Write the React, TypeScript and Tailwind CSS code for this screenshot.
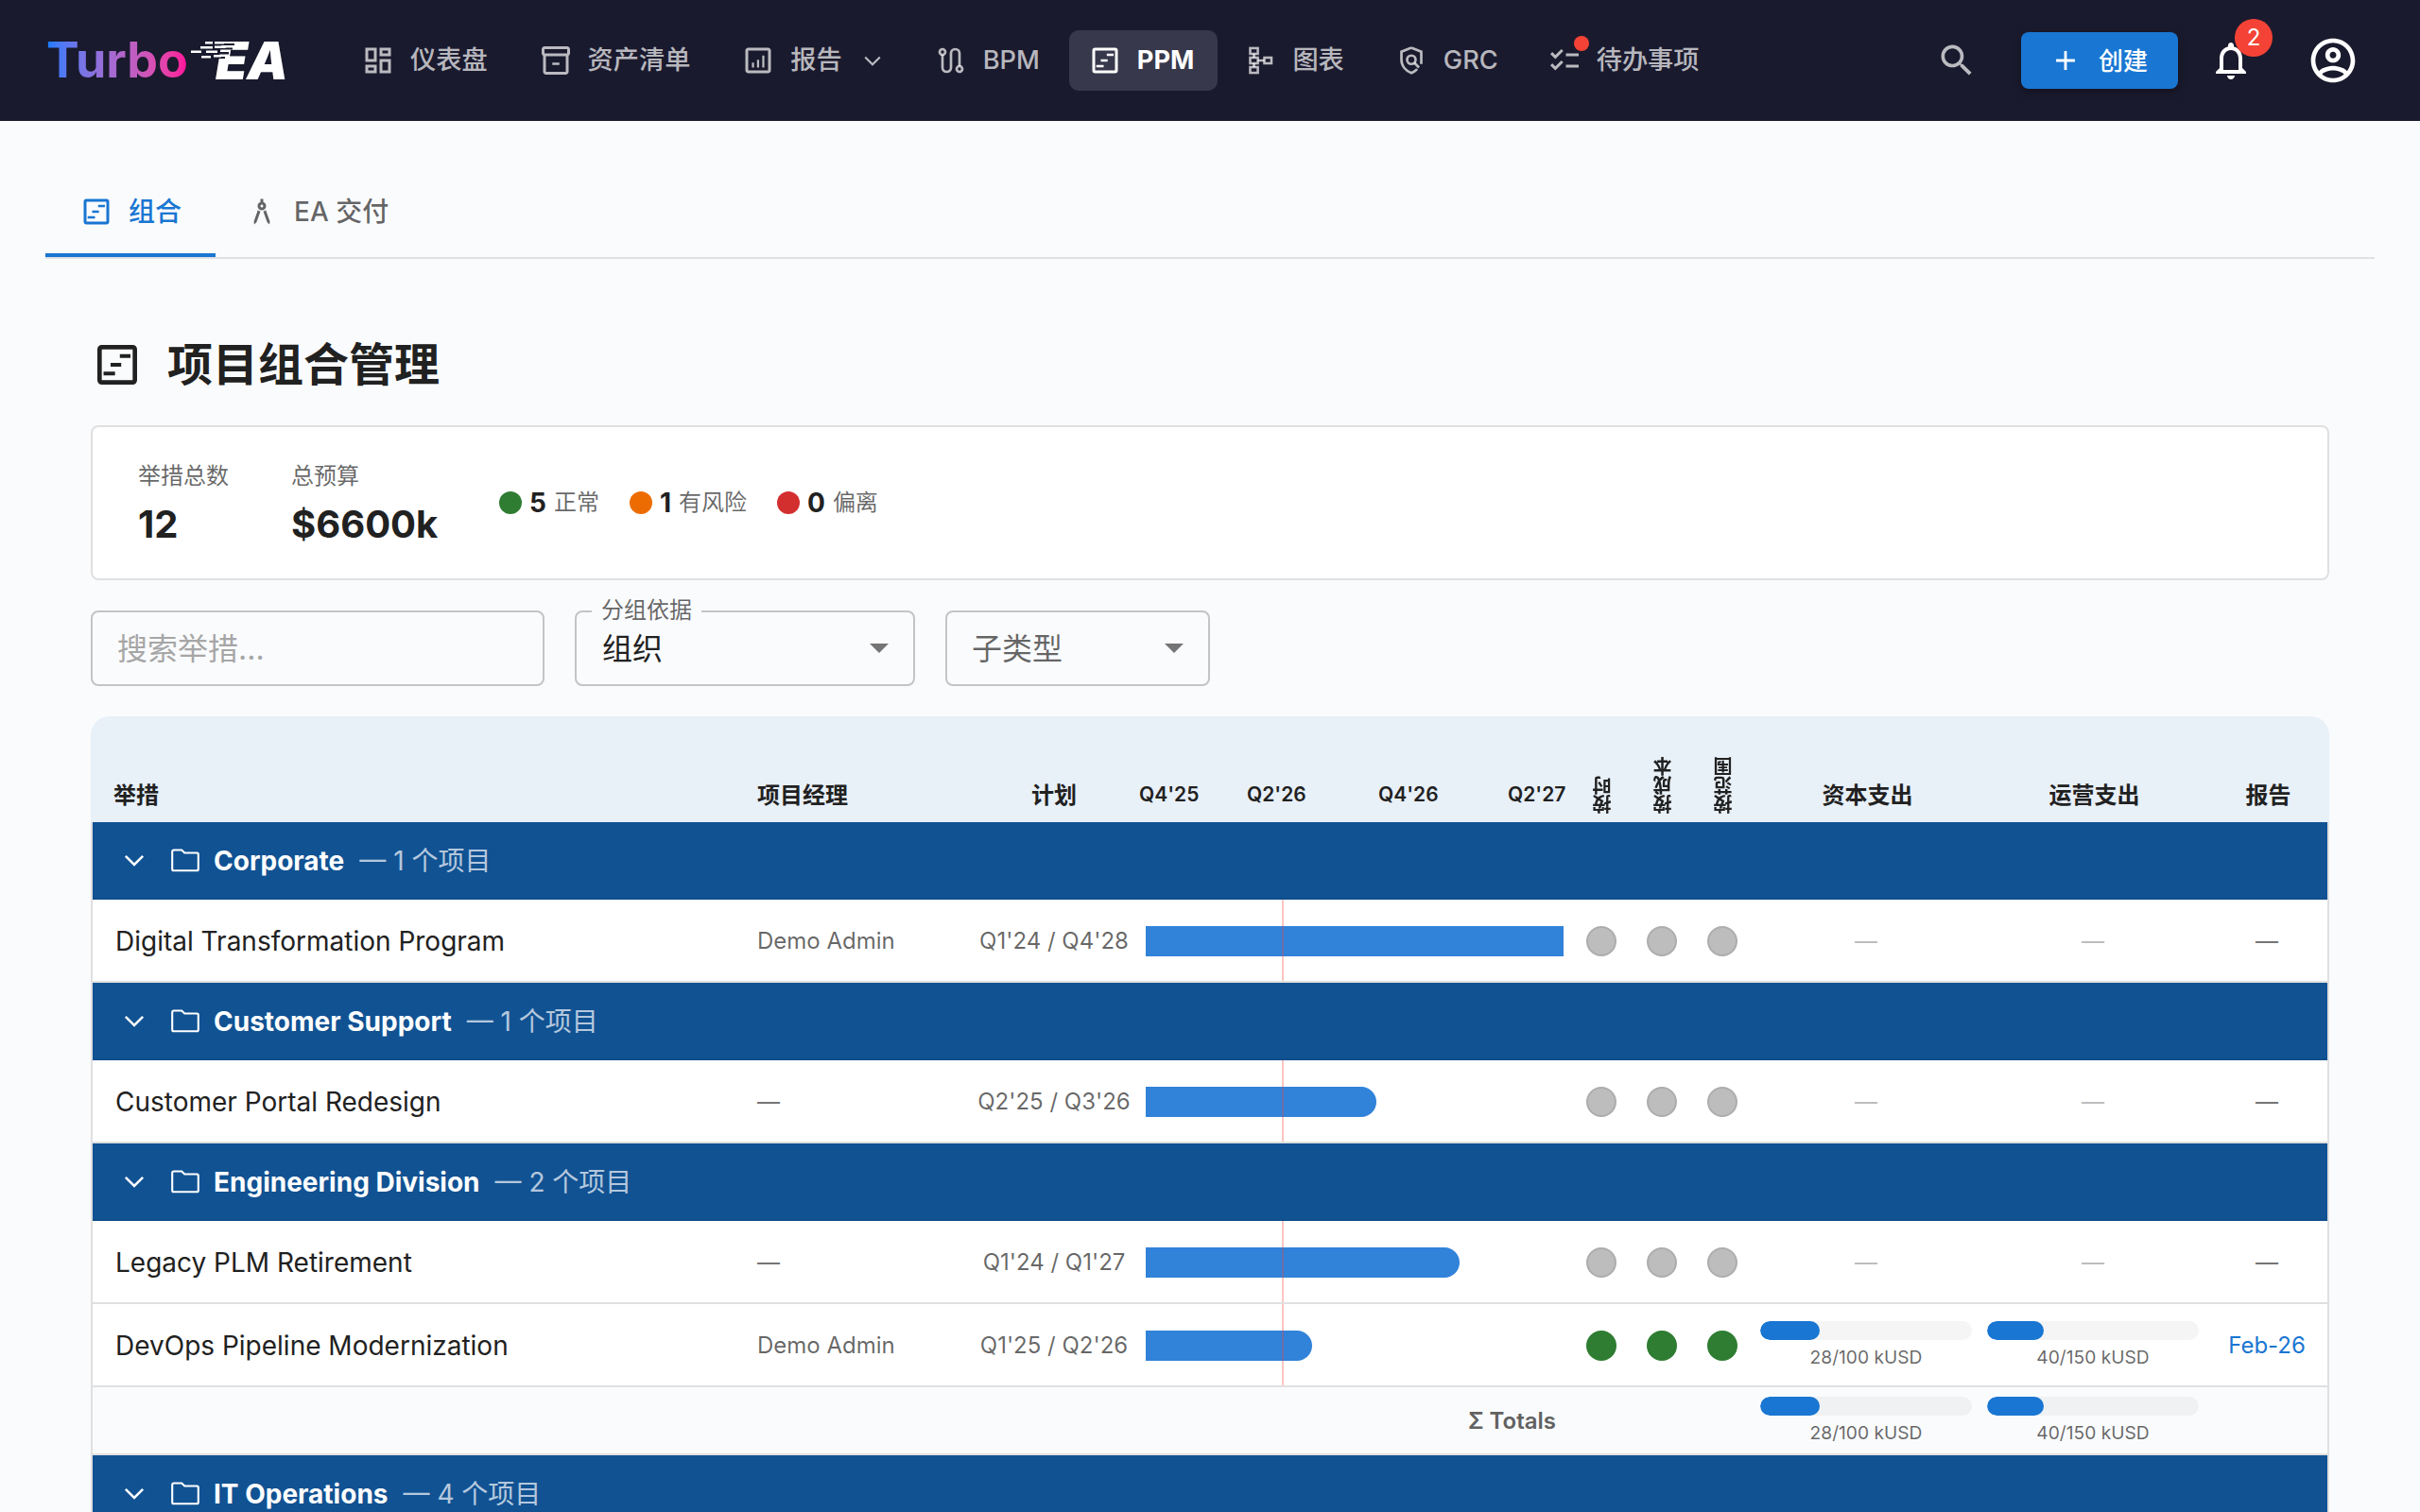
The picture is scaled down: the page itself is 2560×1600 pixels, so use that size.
import React from "react";

const COLS = "grid grid-cols-[695px_233px_178px_458px_64px_64px_64px_240px_240px_128px]";

function Ico({ d, size = 36, className = "" }: { d: string; size?: number; className?: string }) {
  return (
    <svg viewBox="0 0 24 24" width={size} height={size} fill="currentColor" className={`shrink-0 ${className}`}>
      <path d={d} />
    </svg>
  );
}

const P_DASH = "M19 5v2h-4V5h4M9 5v6H5V5h4m10 8v6h-4v-6h4M9 17v2H5v-2h4M21 3h-8v6h8V3zM11 3H3v10h8V3zm10 8h-8v10h8V11zm-10 4H3v6h8v-6z";
const P_INV = "M20 2H4c-1 0-2 .9-2 2v3.01c0 .72.43 1.34 1 1.69V20c0 1.1 1.1 2 2 2h14c.9 0 2-.9 2-2V8.7c.57-.35 1-.97 1-1.69V4c0-1.1-1-2-2-2zm-1 18H5V9h14v11zm1-13H4V4h16v3zM9.5 13.5h5v1.6h-5z";
const P_REPORT = "M19 3H5c-1.1 0-2 .9-2 2v14c0 1.1.9 2 2 2h14c1.1 0 2-.9 2-2V5c0-1.1-.9-2-2-2zm0 16H5V5h14v14zM7.6 13.5h1.5v3.5H7.6zm3.6-2h1.5v5.5h-1.5zm3.7-3h1.5v8.5h-1.5z";
const P_CHECK = "M22 7h-9v2h9V7zm0 8h-9v2h9v-2zM5.54 11 2 7.46l1.41-1.41 2.12 2.12 4.24-4.24 1.41 1.41L5.54 11zm0 8L2 15.46l1.41-1.41 2.12 2.12 4.24-4.24 1.41 1.41L5.54 19z";
const P_SEARCH = "M15.5 14h-.79l-.28-.27C15.41 12.59 16 11.11 16 9.5 16 5.91 13.09 3 9.5 3S3 5.91 3 9.5 5.91 16 9.5 16c1.61 0 3.09-.59 4.23-1.57l.27.28v.79l5 4.99L20.49 19l-4.99-5zm-6 0C7.01 14 5 11.99 5 9.5S7.01 5 9.5 5 14 7.01 14 9.5 11.99 14 9.5 14z";
const P_ADD = "M19 13h-6v6h-2v-6H5v-2h6V5h2v6h6v2z";
const P_BELL = "M12 22c1.1 0 2-.9 2-2h-4c0 1.1.9 2 2 2zm6-6v-5c0-3.07-1.63-5.64-4.5-6.32V4c0-.83-.67-1.5-1.5-1.5s-1.5.67-1.5 1.5v.68C7.64 5.36 6 7.92 6 11v5l-2 2v1h16v-1l-2-2zm-2 1H8v-6c0-2.48 1.51-4.5 4-4.5s4 2.02 4 4.5v6z";
const P_USER = "M12 2C6.48 2 2 6.48 2 12s4.48 10 10 10 10-4.48 10-10S17.52 2 12 2zM7.07 18.28c.43-.9 3.05-1.78 4.93-1.78s4.51.88 4.93 1.78C15.57 19.36 13.86 20 12 20s-3.57-.64-4.93-1.72zm11.29-1.45c-1.43-1.74-4.9-2.33-6.36-2.33s-4.93.59-6.36 2.33C4.62 15.49 4 13.82 4 12c0-4.41 3.59-8 8-8s8 3.59 8 8c0 1.82-.62 3.49-1.64 4.83zM12 6c-1.94 0-3.5 1.56-3.5 3.5S10.06 13 12 13s3.5-1.56 3.5-3.5S13.94 6 12 6zm0 5c-.83 0-1.5-.67-1.5-1.5S11.17 8 12 8s1.5.67 1.5 1.5S12.83 11 12 11z";
const P_ARCH = "M6.36 18.78 6.61 21l1.62-1.54 2.77-7.6c-.68-.17-1.28-.51-1.77-.98l-2.87 7.9zm8.41-7.9c-.49.47-1.1.81-1.77.98l2.77 7.6L17.39 21l.26-2.22-2.88-7.9zM15 8c0-1.3-.84-2.4-2-2.82V3h-2v2.18C9.84 5.6 9 6.7 9 8c0 1.66 1.34 3 3 3s3-1.34 3-3zm-3 1c-.55 0-1-.45-1-1s.45-1 1-1 1 .45 1 1-.45 1-1 1z";

function Chevron({ size, className = "" }: { size: number; className?: string }) {
  return (
    <svg viewBox="0 0 24 24" width={size} height={size} fill="none" stroke="currentColor" strokeWidth="1.5" className={`shrink-0 ${className}`}>
      <path d="M6.5 9.5 12 15l5.5-5.5" />
    </svg>
  );
}

function Folder() {
  return (
    <svg viewBox="0 0 24 24" width={36} height={36} fill="none" stroke="currentColor" strokeWidth="1.4" className="ml-[16px] shrink-0">
      <path d="M3.8 5h5.7l2 2h8.7a1 1 0 0 1 1 1v10.5a1 1 0 0 1-1 1H3.8a1 1 0 0 1-1-1V6a1 1 0 0 1 1-1z" />
    </svg>
  );
}

function Timeline({ size = 36 }: { size?: number }) {
  return (
    <svg viewBox="0 0 24 24" width={size} height={size} fill="none" stroke="currentColor" className="shrink-0">
      <rect x="4" y="4" width="16" height="16" rx="1" strokeWidth="2" />
      <path d="M13.2 8h4.8M9 12h4.8M5.8 16H11" strokeWidth="1.7" />
    </svg>
  );
}

function Bpm() {
  return (
    <svg viewBox="0 0 24 24" width={36} height={36} fill="none" stroke="currentColor" strokeWidth="1.8" className="shrink-0">
      <circle cx="6" cy="6" r="2" />
      <path d="M6 8v9a3 3 0 0 0 6 0V7a3 3 0 0 1 6 0v9" />
      <circle cx="18" cy="18" r="2" />
    </svg>
  );
}

function Schema() {
  return (
    <svg viewBox="0 0 24 24" width={36} height={36} fill="none" stroke="currentColor" strokeWidth="1.7" className="shrink-0">
      <rect x="5" y="3.3" width="5.4" height="4" />
      <rect x="5" y="10" width="5.4" height="4" />
      <rect x="5" y="16.7" width="5.4" height="4" />
      <rect x="15" y="10" width="5" height="4" />
      <path d="M7.7 7.3V10M7.7 14v2.7M10.4 12H15" />
    </svg>
  );
}

function Policy() {
  return (
    <svg viewBox="0 0 24 24" width={36} height={36} fill="none" stroke="currentColor" strokeWidth="1.8" className="shrink-0">
      <path d="M12 3 5 5.8v5.6c0 4.4 2.9 7.9 7 9.4 1.6-.6 3-1.5 4.1-2.7M19 14.5c0-1 0-2 0-3.1V5.8L12 3" />
      <circle cx="12" cy="11.5" r="3" />
      <path d="M14.2 13.7 17.4 17" />
    </svg>
  );
}

function NavItem({ icon, label, active, dot, chevron, className = "" }: { icon: React.ReactNode; label: string; active?: boolean; dot?: boolean; chevron?: boolean; className?: string }) {
  return (
    <div className={`relative flex h-[64px] items-center rounded-[10px] pl-[20px] pr-[24px] text-[27.2px] leading-[40px] ${active ? "bg-[#37384b] font-bold text-white" : "font-medium text-white/70"} ${className}`}>
      {icon}
      <span className="ml-[16px] whitespace-nowrap">{label}</span>
      {chevron && <Chevron size={34} className="ml-[15px] mr-[-6px]" />}
      {dot && <span className="absolute left-[48px] top-[6px] h-[16px] w-[16px] rounded-full bg-[#f44336]" />}
    </div>
  );
}

function Logo() {
  return (
    <div className="relative flex h-[60px] w-[255px] shrink-0 items-center justify-between">
      <span className="bg-linear-to-r from-[#0a7bff] to-[#ff0099] bg-clip-text text-[52px] font-bold leading-[60px] text-transparent">Turbo</span>
      <span className="text-[55px] font-black italic leading-[60px] tracking-[-1px] text-white">EA</span>
      <svg className="absolute left-0 top-0" width="253" height="60" viewBox="0 0 253 60">
        <g fill="#1a1a2e">
          <rect x="177" y="12" width="22" height="2" />
          <rect x="177" y="16.5" width="20" height="2" />
          <rect x="173" y="21" width="20" height="2.5" />
          <rect x="173" y="26" width="16" height="2" />
        </g>
        <g fill="#fff">
          <rect x="168" y="10" width="8" height="2.5" />
          <rect x="178" y="10" width="10" height="2.5" />
          <rect x="163" y="15" width="13" height="2.5" />
          <rect x="178" y="14.5" width="12" height="2.5" />
          <rect x="153" y="19.5" width="11" height="2.5" />
          <rect x="169" y="19.5" width="12" height="2.5" />
          <rect x="164" y="25" width="10" height="2.5" />
          <rect x="177" y="24" width="8" height="2.5" />
        </g>
      </svg>
    </div>
  );
}

function Header() {
  return (
    <header className="flex h-[128px] items-center bg-[#1a1a2e] pl-[49px] pr-[64px]">
      <Logo />
      <nav className="ml-[58px] flex items-center gap-[10px]">
        <NavItem icon={<Ico d={P_DASH} />} label="仪表盘" />
        <NavItem icon={<Ico d={P_INV} />} label="资产清单" />
        <NavItem icon={<Ico d={P_REPORT} />} label="报告" chevron />
        <NavItem icon={<Bpm />} label="BPM" />
        <NavItem icon={<Timeline />} label="PPM" active className="ml-[-3px] pr-[25px]" />
        <NavItem icon={<Schema />} label="图表" className="ml-[-3px]" />
        <NavItem icon={<Policy />} label="GRC" className="ml-[-1px]" />
        <NavItem icon={<Ico d={P_CHECK} />} label="待办事项" dot className="ml-[-2px]" />
      </nav>
      <div className="ml-auto flex items-center">
        <Ico d={P_SEARCH} size={44} className="text-white/70" />
        <button className="ml-[46px] flex h-[60px] w-[166px] items-center rounded-[8px] bg-[#1976d2] pl-[30px] text-[26px] font-medium text-white shadow-[0_4px_8px_rgba(0,0,0,0.3)]">
          <Ico d={P_ADD} size={34} />
          <span className="ml-[18px]">创建</span>
        </button>
        <div className="relative ml-[32px] text-white">
          <Ico d={P_BELL} size={48} />
          <span className="absolute left-[28px] top-[-20px] flex h-[40px] w-[40px] items-center justify-center rounded-full bg-[#f44336] text-[24px] leading-none text-white">2</span>
        </div>
        <Ico d={P_USER} size={56} className="ml-[56px] text-white" />
      </div>
    </header>
  );
}

function Tabs() {
  return (
    <div className="flex h-[98px] border-b-2 border-[#dfe1e4]">
      <div className="flex h-[96px] w-[180px] items-center border-b-4 border-[#1976d2] pl-[36px] pt-[4px] text-[28px] font-medium text-[#1976d2]">
        <Timeline />
        <span className="ml-[16px]">组合</span>
      </div>
      <div className="flex h-[96px] items-center pl-[31px] text-[28px] font-medium text-black/60">
        <Ico d={P_ARCH} />
        <span className="ml-[16px]">EA 交付</span>
      </div>
    </div>
  );
}

function Stat({ dot, value, label }: { dot: string; value: string; label: string }) {
  return (
    <div className="flex items-center">
      <span className={`h-[24px] w-[24px] rounded-full ${dot}`} />
      <span className="ml-[8px] text-[28px] font-bold leading-[36px] text-[#212121]">{value}</span>
      <span className="ml-[8px] text-[24px] leading-[36px] text-black/60">{label}</span>
    </div>
  );
}

function StatsCard() {
  return (
    <div className="mt-[36px] flex h-[164px] items-center rounded-[8px] border-2 border-[#e0e0e0] bg-white pl-[48px]">
      <div className="w-[98px]">
        <div className="text-[24px] leading-[36px] text-black/60">举措总数</div>
        <div className="mt-[9px] text-[40px] font-bold leading-[48px] text-[#212121]">12</div>
      </div>
      <div className="ml-[64px] w-[155px]">
        <div className="text-[24px] leading-[36px] text-black/60">总预算</div>
        <div className="mt-[9px] text-[40px] font-bold leading-[48px] text-[#212121]">$6600k</div>
      </div>
      <div className="ml-[65px] flex items-center gap-[32px]">
        <Stat dot="bg-[#2e7d32]" value="5" label="正常" />
        <Stat dot="bg-[#ed6c02]" value="1" label="有风险" />
        <Stat dot="bg-[#d32f2f]" value="0" label="偏离" />
      </div>
    </div>
  );
}

function Caret() {
  return <span className="h-0 w-0 border-x-[10px] border-t-[10px] border-x-transparent border-t-[#757575]" />;
}

function Filters() {
  return (
    <div className="mt-[32px] flex gap-[32px]">
      <div className="flex h-[80px] w-[480px] items-center rounded-[8px] border-2 border-[#c4c4c4] pl-[26px] pt-[2px] text-[32px] text-[#a6a6a6]">搜索举措...</div>
      <div className="relative flex h-[80px] w-[360px] items-center justify-between rounded-[8px] border-2 border-[#c4c4c4] pl-[27px] pr-[26px] text-[32px] text-[#212121]">
        <span className="pt-[2px]">组织</span>
        <Caret />
        <span className="absolute left-[16px] top-[-16px] bg-[#fafbfd] px-[10px] text-[24px] leading-[28px] text-black/60">分组依据</span>
      </div>
      <div className="flex h-[80px] w-[280px] items-center justify-between rounded-[8px] border-2 border-[#c4c4c4] pl-[26px] pr-[26px] text-[32px] text-black/60">
        <span className="pt-[2px]">子类型</span>
        <Caret />
      </div>
    </div>
  );
}

function RotHead({ text }: { text: string }) {
  return (
    <div className="flex items-end justify-center pb-[9px] pl-[4px]">
      <span className="rotate-180 text-[20px] font-bold leading-[20px] text-[#212121] [writing-mode:vertical-rl]">{text}</span>
    </div>
  );
}

function TableHead() {
  return (
    <div className={`${COLS} h-[112px] bg-[#e8f0f8] pl-[2px] text-[24px] font-bold leading-[32px] text-[#212121]`}>
      <div className="self-end pb-[12px] pl-[22px]">举措</div>
      <div className="self-end pb-[12px] pl-[8px]">项目经理</div>
      <div className="self-end pb-[12px] text-center">计划</div>
      <div className="flex self-end pb-[13px] pl-[1px] text-[21px] font-semibold">
        <span className="w-[62px]">Q4'25</span>
        <span className="ml-[52px] w-[62px]">Q2'26</span>
        <span className="ml-[77px] w-[62px]">Q4'26</span>
        <span className="ml-[75px] w-[62px]">Q2'27</span>
      </div>
      <RotHead text="按时" />
      <RotHead text="按成本" />
      <RotHead text="按范围" />
      <div className="self-end pb-[12px] pl-[3px] text-center">资本支出</div>
      <div className="self-end pb-[12px] pl-[3px] text-center">运营支出</div>
      <div className="self-end pb-[12px] pl-[3px] text-center">报告</div>
    </div>
  );
}

function Group({ name, count }: { name: string; count: string }) {
  return (
    <div className="flex h-[82px] items-center border-b-2 border-[#0f4e8c] bg-[#115293] pl-[24px] text-[28px] leading-[40px] text-white">
      <Chevron size={40} />
      <Folder />
      <span className="ml-[12px] pt-[1px] font-bold">{name}</span>
      <span className="ml-[16px] pt-[1px] text-white/70">— {count} 个项目</span>
    </div>
  );
}

function Dot({ on }: { on?: boolean }) {
  return (
    <div className="flex items-center justify-center">
      <span className={`h-[32px] w-[32px] rounded-full border-2 ${on ? "border-[#2e7d32] bg-[#2e7d32]" : "border-[#adadad] bg-[#bdbdbd]"}`} />
    </div>
  );
}

function Budget({ pct, label, track, top }: { pct: number; label: string; track: string; top: string }) {
  return (
    <div className={`self-start px-[8px] ${top}`}>
      <div className={`h-[20px] overflow-hidden rounded-[10px] ${track}`}>
        <div className="h-full rounded-[10px] bg-[#1976d2]" style={{ width: `${pct}%` }} />
      </div>
      <div className="mt-[4px] text-center text-[19.2px] leading-[28px] text-black/60">{label}</div>
    </div>
  );
}

function Row({ name, pm, plan, barW, rounded = true, on, money }: { name: string; pm?: string; plan: string; barW: number; rounded?: boolean; on?: boolean; money?: boolean }) {
  return (
    <div className={`${COLS} h-[88px] items-center border-b-2 border-[#e0e0e0] bg-white pt-[2px]`}>
      <div className="pl-[24px] text-[28px] leading-[40px] text-[#212121]">{name}</div>
      <div className={`pl-[8px] text-[24px] leading-[32px] ${pm ? "text-black/60" : "text-[#757575]"}`}>{pm ?? "—"}</div>
      <div className="text-center text-[24px] leading-[32px] text-black/60">{plan}</div>
      <div className="relative flex h-full items-center pl-[8px]">
        <div className={`h-[32px] bg-[#3182d9] ${rounded ? "rounded-r-[16px]" : ""}`} style={{ width: barW }} />
        <span className="absolute bottom-0 left-[152px] top-[-2px] w-[2px] bg-[#f44336]/30" />
      </div>
      <Dot on={on} />
      <Dot on={on} />
      <Dot on={on} />
      {money ? (
        <>
          <Budget pct={28} label="28/100 kUSD" track="bg-[#f5f5f5]" top="pt-[16px]" />
          <Budget pct={26.7} label="40/150 kUSD" track="bg-[#f5f5f5]" top="pt-[16px]" />
          <div className="text-center text-[24px] leading-[32px] text-[#1976d2]">Feb-26</div>
        </>
      ) : (
        <>
          <div className="text-center text-[24px] leading-[32px] text-[#bdbdbd]">—</div>
          <div className="text-center text-[24px] leading-[32px] text-[#bdbdbd]">—</div>
          <div className="text-center text-[24px] leading-[32px] text-[#757575]">—</div>
        </>
      )}
    </div>
  );
}

function Totals() {
  return (
    <div className={`${COLS} h-[72px] items-center border-b-2 border-[#e0e0e0]`}>
      <div className="col-span-7 pr-[208px] pt-[2px] text-right text-[24px] font-semibold leading-[32px] text-[#616161]">Σ Totals</div>
      <Budget pct={28} label="28/100 kUSD" track="bg-[#f0f1f3]" top="pt-[10px]" />
      <Budget pct={26.7} label="40/150 kUSD" track="bg-[#f0f1f3]" top="pt-[10px]" />
    </div>
  );
}

export default function App() {
  return (
    <div className="h-[1600px] overflow-hidden bg-[#fafbfd] font-[Inter,'Noto_Sans_CJK_SC',sans-serif]">
      <Header />
      <main className="px-[48px] pt-[48px]">
        <Tabs />
        <div className="px-[48px]">
          <div className="mt-[84px] flex h-[56px] items-center text-[#212121]">
            <Timeline size={56} />
            <h1 className="ml-[25px] text-[48px] font-bold leading-[56px]">项目组合管理</h1>
          </div>
          <StatsCard />
          <Filters />
          <div className="mt-[32px] overflow-hidden rounded-t-[20px]">
            <TableHead />
            <div className="border-x-2 border-[#e0e0e0]">
              <Group name="Corporate" count="1" />
              <Row name="Digital Transformation Program" pm="Demo Admin" plan="Q1'24 / Q4'28" barW={442} rounded={false} />
              <Group name="Customer Support" count="1" />
              <Row name="Customer Portal Redesign" plan="Q2'25 / Q3'26" barW={244} />
              <Group name="Engineering Division" count="2" />
              <Row name="Legacy PLM Retirement" plan="Q1'24 / Q1'27" barW={332} />
              <Row name="DevOps Pipeline Modernization" pm="Demo Admin" plan="Q1'25 / Q2'26" barW={176} on money />
              <Totals />
              <Group name="IT Operations" count="4" />
            </div>
          </div>
        </div>
      </main>
    </div>
  );
}
